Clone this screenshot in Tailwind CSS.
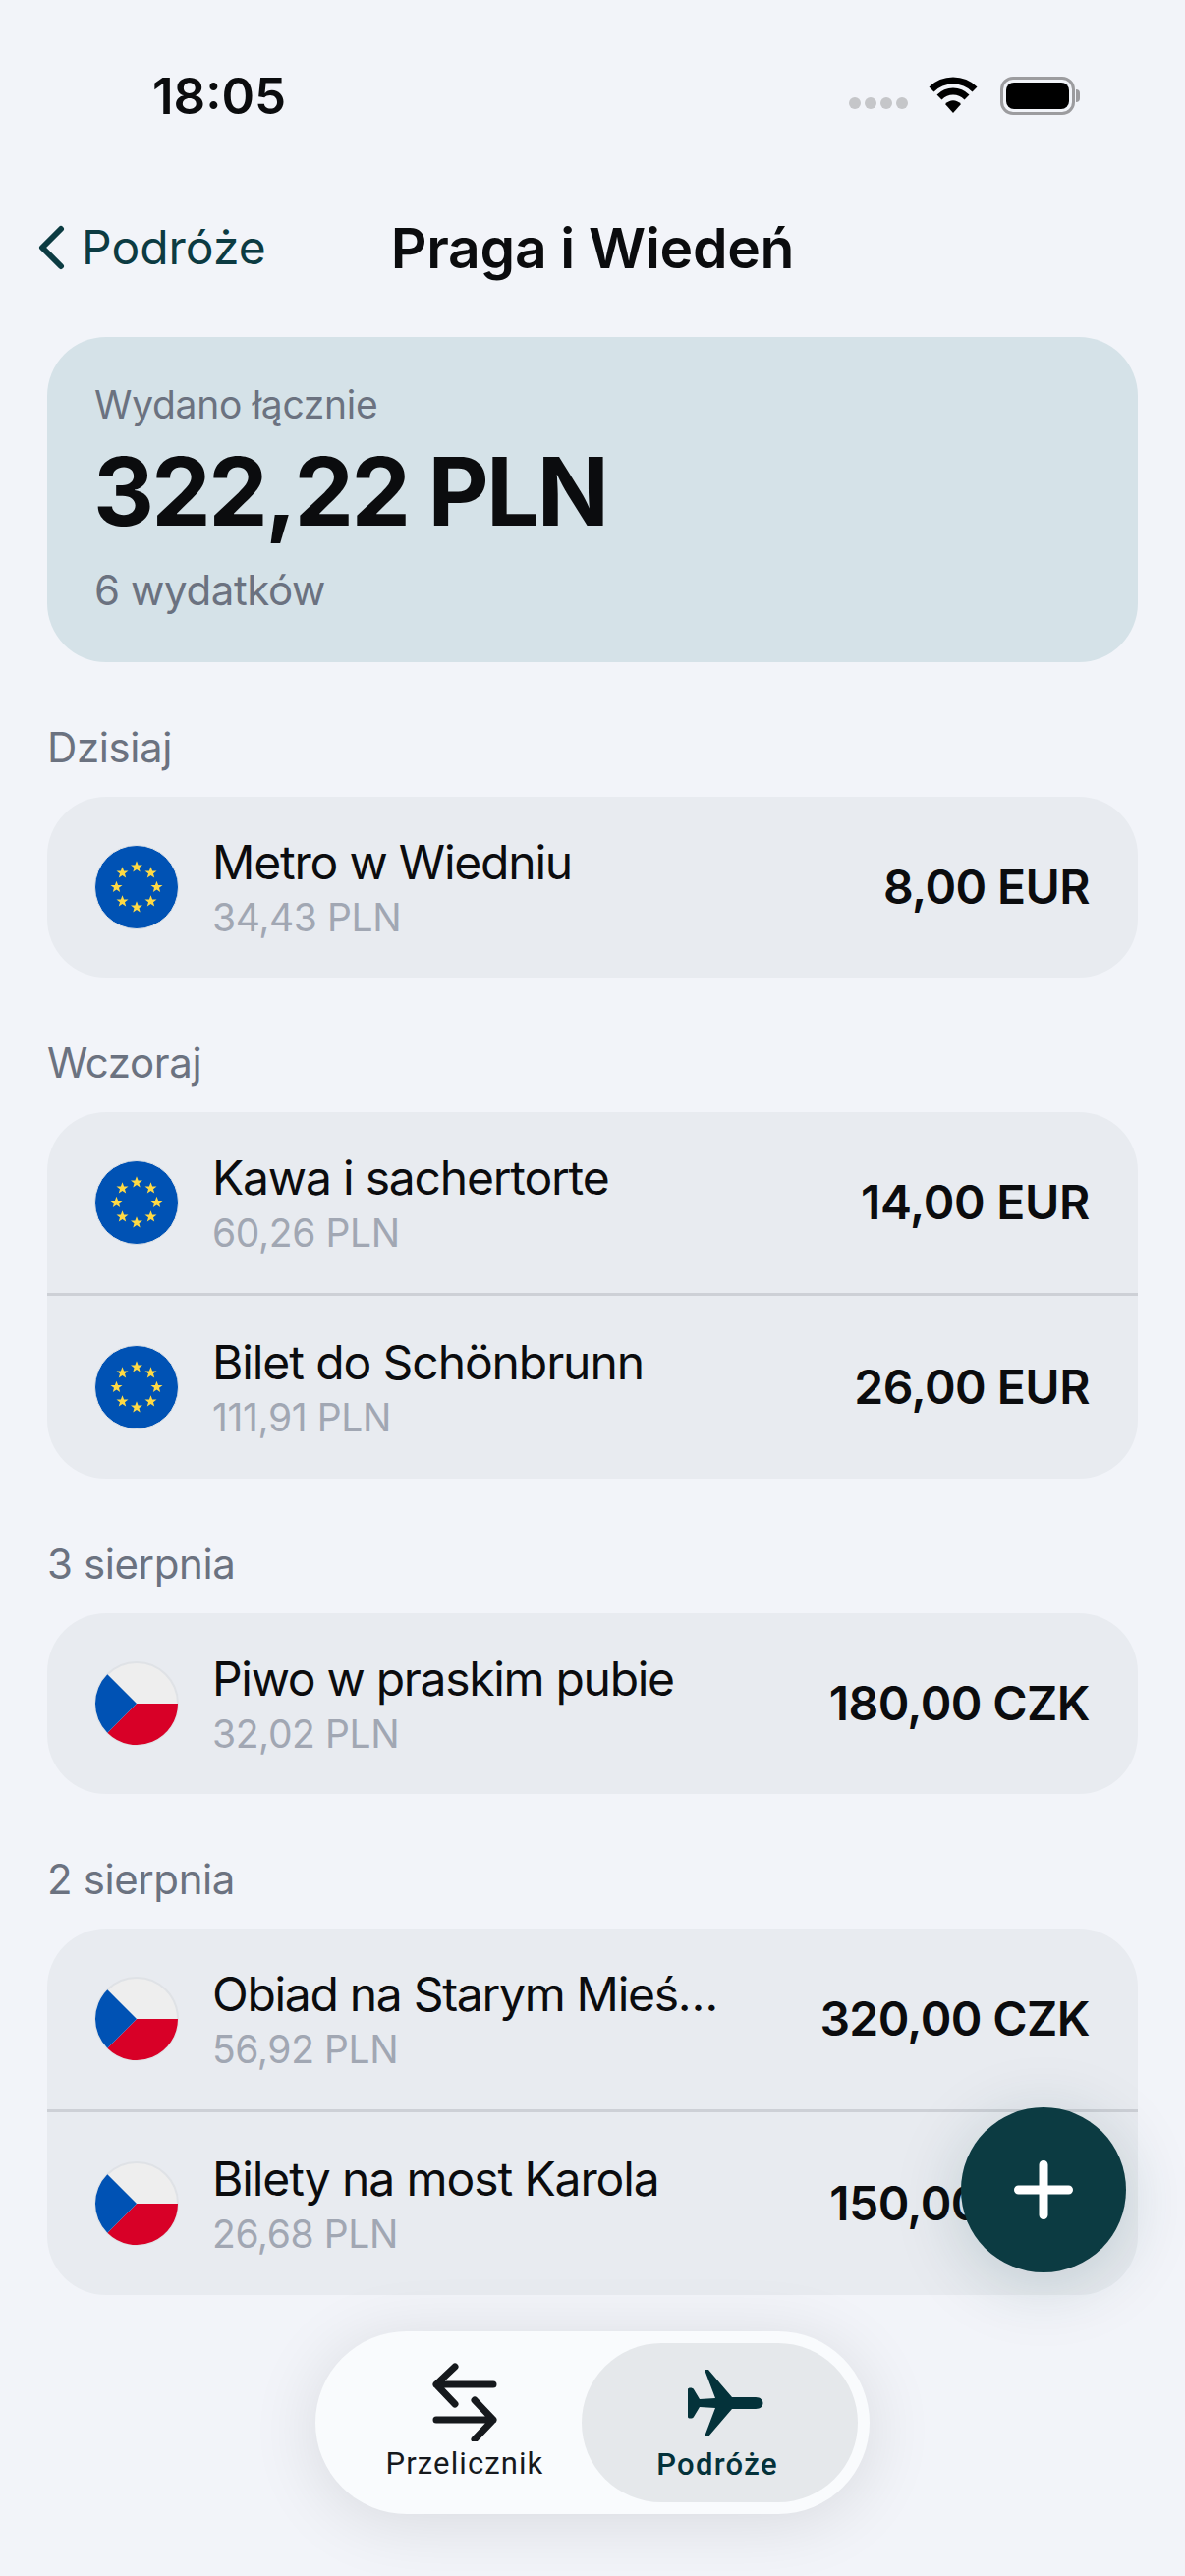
<!DOCTYPE html>
<html lang="pl">
<head>
    <meta charset="UTF-8">
    <meta name="viewport" content="width=device-width, initial-scale=1.0">
    <title>Praga i Wiedeń</title>
    <script src="https://cdn.jsdelivr.net/npm/@tailwindcss/browser@4"></script>
</head>
<body class="bg-[#f2f4f9] font-['Inter',sans-serif] text-[#0b0c0e]">
    <!-- shared flags -->
    <svg width="0" height="0" class="absolute">
        <defs>
            <polygon id="star" points="0,-6.2 1.6,-2 6,-1.9 2.5,0.8 3.7,5 0,2.6 -3.7,5 -2.5,0.8 -6,-1.9 -1.6,-2" fill="#ffda44"/>
            <symbol id="flag-eu" viewBox="0 0 86 86">
                <circle cx="43" cy="43" r="42.5" fill="#0052b4" stroke="#dfe2e6" stroke-width="1"/>
                <use href="#star" x="43" y="22.5"/>
                <use href="#star" x="57.5" y="28.5"/>
                <use href="#star" x="63.5" y="43"/>
                <use href="#star" x="57.5" y="57.5"/>
                <use href="#star" x="43" y="63.5"/>
                <use href="#star" x="28.5" y="57.5"/>
                <use href="#star" x="22.5" y="43"/>
                <use href="#star" x="28.5" y="28.5"/>
            </symbol>
            <symbol id="flag-cz" viewBox="0 0 86 86">
                <circle cx="43" cy="43" r="42" fill="#eeeeee" stroke="#dfe2e6" stroke-width="2"/>
                <path d="M1 43h84a42 42 0 0 1-71.7 29.7L43 43z" fill="#d80027"/>
                <path d="M13.3 13.3L43 43 13.3 72.7a42 42 0 0 1 0-59.4z" fill="#0052b4"/>
            </symbol>
        </defs>
    </svg>

    <div class="relative w-[1206px] h-[2622px] overflow-hidden">
        <!-- status bar -->
        <div class="flex items-center justify-between h-[78px] mt-[58px] pl-[155px] pr-[107px]">
            <span class="text-[51px] font-semibold leading-none">18:05</span>
            <div class="flex items-center">
                <div class="flex gap-[4px] mt-[16px] mr-[21px]">
                    <span class="w-[12px] h-[12px] rounded-full bg-[#c5c6c9]"></span>
                    <span class="w-[12px] h-[12px] rounded-full bg-[#c5c6c9]"></span>
                    <span class="w-[12px] h-[12px] rounded-full bg-[#c5c6c9]"></span>
                    <span class="w-[12px] h-[12px] rounded-full bg-[#c5c6c9]"></span>
                </div>
                <svg class="w-[50px] h-[38px] mr-[23px]" viewBox="0 0 50 38" fill="none" stroke="#000" stroke-width="7">
                    <path d="M3 13C15 1 35 1 47 13"/>
                    <path d="M11 21C19 13 31 13 39 21"/>
                    <path d="M25 37L17 28C22 23 28 23 33 28z" fill="#000" stroke="none"/>
                </svg>
                <div class="flex items-center">
                    <div class="flex items-center justify-center w-[76px] h-[39px] rounded-[13px] border-[3px] border-[#9c9c9f] p-[3px]">
                        <div class="w-full h-full rounded-[8px] bg-black"></div>
                    </div>
                    <div class="w-[4px] h-[13px] ml-[1px] rounded-r-full bg-[#9c9c9f]"></div>
                </div>
            </div>
        </div>

        <!-- nav -->
        <div class="grid grid-cols-[1fr_auto_1fr] items-center h-[70px] mt-[81px]">
            <div class="flex items-center gap-[17px] pl-[38px] text-[#0c3b42]">
                <svg class="w-[28px] h-[46px]" viewBox="0 0 28 46" fill="none" stroke="currentColor" stroke-width="6" stroke-linecap="round" stroke-linejoin="round">
                    <path d="M24 4L5 23l19 19"/>
                </svg>
                <span class="text-[48px] leading-none">Podróże</span>
            </div>
            <h1 class="text-[57px] font-semibold tracking-[-0.3px] leading-none">Praga i Wiedeń</h1>
            <div></div>
        </div>

        <div class="px-[48px] mt-[56px]">
            <!-- total -->
            <div class="flex flex-col h-[331px] px-[48px] pt-[47px] rounded-[60px] bg-[#d5e2e8]">
                <span class="text-[39px] tracking-[-0.3px] leading-[44px] text-[#6b7280]">Wydano łącznie</span>
                <span class="text-[96px] font-bold tracking-[-2.6px] leading-[112px] mt-[10px] -ml-[1px]">322,22 PLN</span>
                <span class="text-[42px] tracking-[-0.4px] leading-[48px] mt-[21px] text-[#6b7280]">6 wydatków</span>
            </div>

            <h2 class="h-[60px] mt-[57px] mb-[20px] text-[42px] tracking-[-0.4px] leading-[60px] font-normal text-[#6b7280]">Dzisiaj</h2>
            <div class="rounded-[60px] bg-[#e8ebf0]">
                <div class="flex items-center h-[184px] pl-[48px] pr-[49px]">
                    <svg class="w-[86px] h-[86px] shrink-0"><use href="#flag-eu"/></svg>
                    <div class="flex flex-col ml-[34px]">
                        <span class="text-[48px] tracking-[-1.2px] leading-[58px]">Metro w Wiedniu</span>
                        <span class="text-[39px] tracking-[-0.4px] leading-[48px] mt-[3px] text-[#a1a7b3]">34,43 PLN</span>
                    </div>
                    <span class="ml-auto text-[48px] font-semibold tracking-[-0.6px]">8,00 EUR</span>
                </div>
            </div>

            <h2 class="h-[60px] mt-[57px] mb-[20px] text-[42px] tracking-[-0.4px] leading-[60px] font-normal text-[#6b7280]">Wczoraj</h2>
            <div class="rounded-[60px] bg-[#e8ebf0] divide-y-[3px] divide-[#cdd0d6]">
                <div class="flex items-center h-[187px] pl-[48px] pr-[49px]">
                    <svg class="w-[86px] h-[86px] shrink-0"><use href="#flag-eu"/></svg>
                    <div class="flex flex-col ml-[34px]">
                        <span class="text-[48px] tracking-[-1.2px] leading-[58px]">Kawa i sachertorte</span>
                        <span class="text-[39px] tracking-[-0.4px] leading-[48px] mt-[3px] text-[#a1a7b3]">60,26 PLN</span>
                    </div>
                    <span class="ml-auto text-[48px] font-semibold tracking-[-0.3px]">14,00 EUR</span>
                </div>
                <div class="flex items-center h-[186px] pl-[48px] pr-[49px]">
                    <svg class="w-[86px] h-[86px] shrink-0"><use href="#flag-eu"/></svg>
                    <div class="flex flex-col ml-[34px]">
                        <span class="text-[48px] tracking-[-1.1px] leading-[58px]">Bilet do Schönbrunn</span>
                        <span class="text-[39px] tracking-[-0.4px] leading-[48px] mt-[3px] text-[#a1a7b3]">111,91 PLN</span>
                    </div>
                    <span class="ml-auto text-[48px] font-semibold tracking-[-0.5px]">26,00 EUR</span>
                </div>
            </div>

            <h2 class="h-[60px] mt-[57px] mb-[20px] text-[42px] tracking-[-0.4px] leading-[60px] font-normal text-[#6b7280]">3 sierpnia</h2>
            <div class="rounded-[60px] bg-[#e8ebf0]">
                <div class="flex items-center h-[184px] pl-[48px] pr-[49px]">
                    <svg class="w-[86px] h-[86px] shrink-0"><use href="#flag-cz"/></svg>
                    <div class="flex flex-col ml-[34px]">
                        <span class="text-[48px] tracking-[-1.3px] leading-[58px]">Piwo w praskim pubie</span>
                        <span class="text-[39px] tracking-[-0.4px] leading-[48px] mt-[3px] text-[#a1a7b3]">32,02 PLN</span>
                    </div>
                    <span class="ml-auto text-[48px] font-semibold tracking-[-0.6px]">180,00 CZK</span>
                </div>
            </div>

            <h2 class="h-[60px] mt-[57px] mb-[20px] text-[42px] tracking-[-0.4px] leading-[60px] font-normal text-[#6b7280]">2 sierpnia</h2>
            <div class="rounded-[60px] bg-[#e8ebf0] divide-y-[3px] divide-[#cdd0d6]">
                <div class="flex items-center h-[187px] pl-[48px] pr-[49px]">
                    <svg class="w-[86px] h-[86px] shrink-0"><use href="#flag-cz"/></svg>
                    <div class="flex flex-col ml-[34px]">
                        <span class="text-[48px] tracking-[-1.3px] leading-[58px]">Obiad na Starym Mieś…</span>
                        <span class="text-[39px] tracking-[-0.4px] leading-[48px] mt-[3px] text-[#a1a7b3]">56,92 PLN</span>
                    </div>
                    <span class="ml-auto text-[48px] font-semibold tracking-[-0.6px]">320,00 CZK</span>
                </div>
                <div class="flex items-center h-[186px] pl-[48px] pr-[49px]">
                    <svg class="w-[86px] h-[86px] shrink-0"><use href="#flag-cz"/></svg>
                    <div class="flex flex-col ml-[34px]">
                        <span class="text-[48px] tracking-[-1.1px] leading-[58px]">Bilety na most Karola</span>
                        <span class="text-[39px] tracking-[-0.4px] leading-[48px] mt-[3px] text-[#a1a7b3]">26,68 PLN</span>
                    </div>
                    <span class="ml-auto text-[48px] font-semibold tracking-[-0.6px]">150,00 CZK</span>
                </div>
            </div>
        </div>

        <!-- add button -->
        <button class="absolute left-[978px] top-[2145px] flex items-center justify-center w-[168px] h-[168px] rounded-full bg-[#0c3b42] shadow-[0_12px_70px_rgba(12,59,66,0.18)]">
            <svg class="w-[60px] h-[60px]" viewBox="0 0 60 60" fill="none" stroke="#fff" stroke-width="9" stroke-linecap="round">
                <path d="M30 4.5v51M4.5 30h51"/>
            </svg>
        </button>

        <!-- tab bar -->
        <div class="absolute left-[321px] top-[2373px] flex w-[564px] h-[186px] p-[12px] rounded-[93px] bg-[#f9fbfd] shadow-[0_8px_70px_rgba(0,0,0,0.11)]">
            <div class="flex flex-col items-center w-[259px] pl-[21px] pt-[20px] text-[#16191d]">
                <svg class="w-[66px] h-[80px]" viewBox="0 0 66 80" fill="none" stroke="currentColor" stroke-width="7" stroke-linecap="round" stroke-linejoin="round">
                    <path d="M62 22H4M23 4L4 22l19 20"/>
                    <path d="M4 58h58M43 38l19 20-19 20"/>
                </svg>
                <span class="font-['Roboto',sans-serif] text-[31px] font-normal tracking-[1.1px] leading-[36px] mt-[5px]">Przelicznik</span>
            </div>
            <div class="flex flex-col items-center w-[281px] pr-[5px] pt-[26px] rounded-[81px] bg-[#e5e8eb] text-[#04323a]">
                <svg class="w-[78px] h-[70px] ml-[15px]" viewBox="0 0 78 70" fill="#04323a">
                    <path d="M18 1h4l24 28h24c10 0 10 12 0 12H46L22 69h-4l11-29-16-1-6 10c-1 2-6 2-6 0V21c0-2 5-2 6 0l6 10 16-1z"/>
                </svg>
                <span class="font-['Roboto',sans-serif] text-[31px] font-medium tracking-[1.3px] leading-[36px] mt-[10px]">Podróże</span>
            </div>
        </div>
    </div>
</body>
</html>
